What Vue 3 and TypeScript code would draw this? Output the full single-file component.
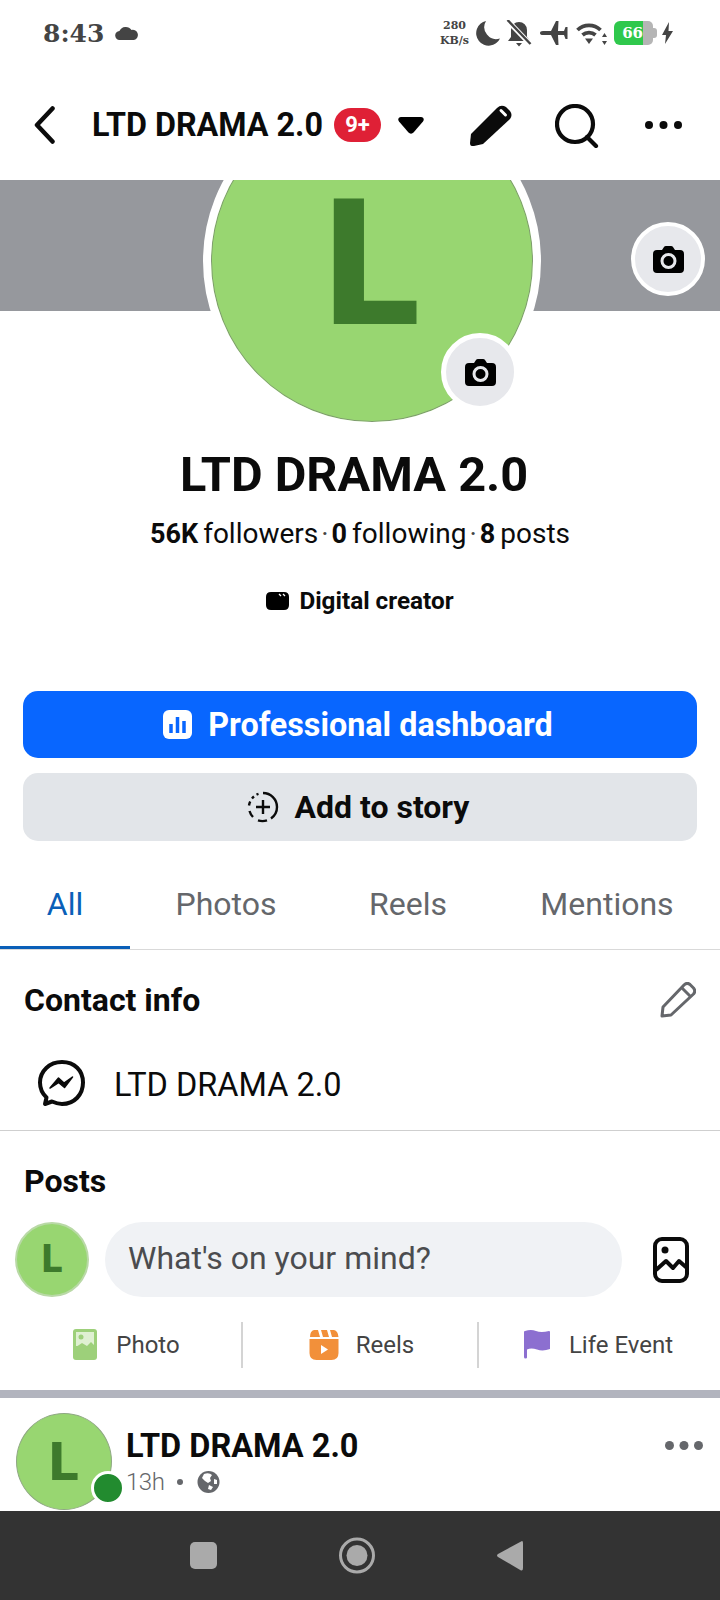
<template>
  <div class="page">
    <div class="main">
      <!-- status bar -->
      <div class="status">
        <div class="status-left">
          <span class="clock">8:43</span>
          <svg width="24" height="14" viewBox="0 0 24 14"><path d="M5 14a4.500 4.500 0 0 1-.6-9A7 7 0 0 1 16.500 4 5 5 0 0 1 19 14z" fill="#444" /></svg>
        </div>
        <div class="status-right">
          <div class="speed"><span>280</span><span>KB/s</span></div>
          <svg class="moon" width="25" height="25" viewBox="0 0 25 25"><path d="M11 0a12.500 12.500 0 1 0 14 17.500A12 12 0 0 1 11 0z" fill="#444" /></svg>
          <svg class="bell" width="26" height="27" viewBox="0 0 26 27" fill="#444">
            <path d="M13 2a8 8 0 0 0-8 8v7l-3 4h22l-3-4v-7a8 8 0 0 0-8-8zM10 23h6l-3 3.500z" />
            <path d="M1 0l24 25" stroke="#fff" stroke-width="5" />
            <path d="M1.500 0l23 24" stroke="#444" stroke-width="2.400" />
          </svg>
          <svg class="plane" width="28" height="24" viewBox="0 0 28 24"><path d="M0 12q0-2 3-2h8L16 0h2.500L18 10h6l1.500-4h2v12h-2L24 14h-6l.5 10H16l-5-10H3q-3 0-3-2z" fill="#444" /></svg>
          <svg class="wifi" width="32" height="23" viewBox="0 0 32 23" fill="none" stroke="#444">
            <path d="M1.500 8a16.500 16.500 0 0 1 23 0M6.500 13a10 10 0 0 1 13 0" stroke-width="3.800" />
            <path d="M9 16.500h8L13 22z" fill="#444" stroke="none" />
            <path d="M28.500 11l-2.500 4h5zM28.500 23l-2.500-4h5z" fill="#444" stroke="none" />
          </svg>
          <div class="battery"><span class="battery-fill">66</span><span class="battery-rest"></span><span class="battery-nub"></span></div>
          <svg class="bolt" width="11" height="22" viewBox="0 0 11 22"><path d="M7 0L0 13h4l-1 9 8-13H6.500z" fill="#444" /></svg>
        </div>
      </div>

      <!-- app bar -->
      <div class="topbar">
        <svg class="back" width="22" height="38" viewBox="0 0 22 38"><path d="M18.500 2.500L3 19l15.500 16.500" fill="none" stroke="#0b0b0b" stroke-width="4.500" stroke-linecap="round" stroke-linejoin="round" /></svg>
        <span class="top-title">LTD DRAMA 2.0</span>
        <span class="badge">9+</span>
        <svg class="caret" width="26" height="17" viewBox="0 0 26 17"><path d="M3 0h20c2.500 0 3.500 2.500 2 4.500L15.500 15.500c-1.300 1.500-3.700 1.500-5 0L1 4.500C-.5 2.500.5 0 3 0z" fill="#000" /></svg>
        <svg class="pencil" width="42" height="41" viewBox="0 0 42 41">
          <path d="M2 41q-2 0-2-3l1-9L27 3q4-4 9-1l4 4q3 4 0 8L13 39l-9 2z" fill="#0b0b0b" />
          <path d="M31 5.500l4.500 4.500" stroke="#fff" stroke-width="3" stroke-linecap="round" />
        </svg>
        <svg class="search" width="46" height="44" viewBox="0 0 46 44" fill="none" stroke="#0b0b0b" stroke-width="4.200">
          <circle cx="20" cy="20" r="18" />
          <path d="M32 33l9 9" stroke-linecap="round" />
        </svg>
        <svg class="more" width="37" height="8" viewBox="0 0 37 8" fill="#0b0b0b"><circle cx="4" cy="4" r="4" /><circle cx="18.500" cy="4" r="4" /><circle cx="33" cy="4" r="4" /></svg>
      </div>

      <!-- cover and profile picture -->
      <div class="cover">
        <div class="avatar-big">L</div>
        <div class="cam cam-avatar">
          <svg width="31" height="27" viewBox="0 0 31 27"><path d="M9 4l2-3q.5-1 2-1h5q1.500 0 2 1l2 3h5q4 0 4 4v15q0 4-4 4H4q-4 0-4-4V8q0-4 4-4z" fill="#000" /><circle cx="15.500" cy="15" r="6.500" fill="none" stroke="#e7e8ec" stroke-width="3" /></svg>
        </div>
        <div class="cam cam-cover">
          <svg width="31" height="27" viewBox="0 0 31 27"><path d="M9 4l2-3q.5-1 2-1h5q1.500 0 2 1l2 3h5q4 0 4 4v15q0 4-4 4H4q-4 0-4-4V8q0-4 4-4z" fill="#000" /><circle cx="15.500" cy="15" r="6.500" fill="none" stroke="#e7e8ec" stroke-width="3" /></svg>
        </div>
      </div>

      <div class="identity">
        <h1 class="name">LTD DRAMA 2.0</h1>
        <div class="stats">
          <template v-for="(stat, i) in stats" :key="stat.label">
            <span v-if="i > 0" class="stat-sep">·</span>
            <span class="stat"><b>{{ stat.value }}</b><span>{{ stat.label }}</span></span>
          </template>
        </div>
        <div class="role">
          <svg width="23" height="18" viewBox="0 0 23 18"><path d="M5 0h13q5 0 5 5v8q0 5-5 5H5q-5 0-5-5V5q0-5 5-5z" fill="#000" /><path d="M13 2l2 2M17 2l2 2" stroke="#fff" stroke-width="1.300" /></svg>
          <span>Digital creator</span>
        </div>
      </div>

      <div class="buttons">
        <div class="btn btn-blue">
          <svg width="29" height="29" viewBox="0 0 29 29"><rect width="29" height="29" rx="6" fill="#fff" /><path d="M8 14v9M14.500 7v16M21 11v12" stroke="#0866ff" stroke-width="3.500" /></svg>
          <span>Professional dashboard</span>
        </div>
        <div class="btn btn-grey">
          <svg width="32" height="32" viewBox="0 0 32 32" fill="none" stroke="#0b0b0b" stroke-width="2.400">
            <path d="M16 2a14 14 0 0 1 14 14 14 14 0 0 1-6 11.500" />
            <path d="M20 29.400a14 14 0 0 1-9 0" />
            <path d="M6 26a14 14 0 0 1-3.500-6M2 14.500a14 14 0 0 1 1.200-4M5 7.500a14 14 0 0 1 2-2M9.500 3.600a14 14 0 0 1 2-.8" />
            <path d="M16 9v14M9 16h14" />
          </svg>
          <span>Add to story</span>
        </div>
      </div>

      <div class="tabs">
        <div v-for="(tab, i) in tabs" :key="tab" class="tab" :class="{ active: i === 0 }">{{ tab }}</div>
      </div>

      <!-- contact info -->
      <div class="contact">
        <div class="contact-head">
          <h2 class="section-title">Contact info</h2>
          <svg width="36" height="36" viewBox="0 0 36 36" fill="none" stroke="#65676b" stroke-width="3" stroke-linejoin="round"><path d="M2 34l1-9L24 3q3-3 6-.5l3.500 3.500q2.500 3 0 6L11 33z" /><path d="M22 6l8 8" /></svg>
        </div>
        <div class="contact-row">
          <svg width="48" height="47" viewBox="0 0 48 47" fill="none"><path d="M25 2C12.500 2 3 11 3 22.500c0 6 2.500 11.300 6.500 15L8 44l7-2.500c3 1.300 6.300 2.500 10 2.500 12.500 0 21-9.500 21-21.500S37.500 2 25 2z" stroke="#0b0b0b" stroke-width="4" stroke-linejoin="round" /><path d="M13 28l8.500-10 5.500 5 8.500-6-8 10.500-6-5z" fill="#0b0b0b" stroke="#0b0b0b" stroke-width="1.500" stroke-linejoin="round" /></svg>
          <span class="contact-name">LTD DRAMA 2.0</span>
        </div>
      </div>

      <!-- posts -->
      <h2 class="section-title posts-title">Posts</h2>
      <div class="composer">
        <div class="avatar-small">L</div>
        <div class="pill">What's on your mind?</div>
        <svg class="composer-photo" width="36" height="46" viewBox="0 0 36 46" fill="none" stroke="#0b0b0b" stroke-width="4"><rect x="2" y="2" width="32" height="42" rx="7" /><circle cx="12" cy="13" r="3.500" fill="#0b0b0b" stroke="none" /><path d="M3 33l10-9 7 7 6-7 8 7" stroke-linejoin="round" /></svg>
      </div>
      <div class="actions">
        <div class="action action-photo">
          <svg width="24" height="31" viewBox="0 0 24 31"><rect width="24" height="31" rx="3" fill="#9dd07a" /><rect x="3" y="3" width="18" height="14" fill="#dff0d2" /><circle cx="8" cy="8" r="2.500" fill="#9dd07a" /><path d="M3 18l6-4 5 3 4-4 3 3v5H3z" fill="#9dd07a" /></svg>
          <span>Photo</span>
        </div>
        <div class="action action-reels">
          <svg width="30" height="30" viewBox="0 0 30 30"><path d="M5 0h4l2 7H1q0-6 4-7zM12 0h6l2 7h-6zM21 0h4q4 1 4.500 7H23z" fill="#f2903a" /><path d="M.500 9h29v14q0 7-7 7h-15q-7 0-7-7z" fill="#f2903a" /><path d="M12 15l7 4.500-7 4.500z" fill="#fff" /></svg>
          <span>Reels</span>
        </div>
        <div class="action action-life">
          <svg width="26" height="29" viewBox="0 0 26 29"><path d="M0 2q0-1 1-1 6-2 11 0t13 0q1 0 1 1v17q-7 2.500-13 .5-6-2-10 0v8q0 1-1.500 1T0 27z" fill="#8c6fd0" /></svg>
          <span>Life Event</span>
        </div>
      </div>
      <div class="thick-rule"></div>

      <div class="post-head">
        <div class="post-avatar">
          <span>L</span>
          <i class="online"></i>
        </div>
        <div class="post-meta">
          <div class="post-name">LTD DRAMA 2.0</div>
          <div class="post-time">
            <span>13h</span>
            <span class="post-dot"></span>
            <svg width="23" height="22" viewBox="0 0 23 22"><circle cx="11.500" cy="11" r="11" fill="#65676b" /><path d="M7 3q5-2 8 1l-2 3 1 3-3 2-3-2-3-3zM12 14l4 2-2 3-3-1zM17 8l3 1 0 4-3 0z" fill="#fff" /></svg>
          </div>
        </div>
        <svg class="post-more" width="38" height="9" viewBox="0 0 38 9" fill="#65676b"><circle cx="4.500" cy="4.500" r="4.500" /><circle cx="19" cy="4.500" r="4.500" /><circle cx="33.500" cy="4.500" r="4.500" /></svg>
      </div>
    </div>

    <!-- android nav -->
    <div class="nav">
      <svg width="27" height="27" viewBox="0 0 27 27"><rect width="27" height="27" rx="5" fill="#aaa" /></svg>
      <svg width="36" height="37" viewBox="0 0 36 37"><circle cx="18" cy="18.500" r="16.500" fill="none" stroke="#aaa" stroke-width="3" /><circle cx="18" cy="18.500" r="10.500" fill="#aaa" /></svg>
      <svg width="26" height="31" viewBox="0 0 26 31"><path d="M25 1q1 0 1 2v25q0 3-2 2.500L1 17q-2-1.500 0-3z" fill="#aaa" /></svg>
    </div>
  </div>
</template>

<script setup lang="ts">
interface Stat {
  value: string
  label: string
}

const stats: Stat[] = [
  { value: '56K', label: 'followers' },
  { value: '0', label: 'following' },
  { value: '8', label: 'posts' }
]

const tabs: string[] = ['All', 'Photos', 'Reels', 'Mentions']
</script>

<style>
html,
body {
  margin: 0;
  background: #fff;
}
</style>

<style scoped>
.page {
  width: 720px;
  height: 1600px;
  display: flex;
  flex-direction: column;
  overflow: hidden;
  background: #fff;
  color: #0b0b0b;
  font-family: Roboto, "Liberation Sans", sans-serif;
}

.main {
  flex: 1;
  min-height: 0;
  overflow: hidden;
}

.status {
  height: 66px;
  display: flex;
  align-items: center;
  justify-content: space-between;
  padding: 0 47px 0 43px;
  position: relative;
  z-index: 2;
  background: #fff;
}

.status-left {
  display: flex;
  align-items: center;
  gap: 11px;
}

.clock {
  font-family: "DejaVu Serif", serif;
  font-weight: 700;
  font-size: 25px;
  color: #444;
}

.status-right {
  display: flex;
  align-items: center;
}

.speed {
  width: 31px;
  display: flex;
  flex-direction: column;
  align-items: center;
  font-family: "DejaVu Serif", serif;
  font-weight: 700;
  font-size: 11px;
  line-height: 15px;
  color: #444;
}

.moon {
  margin-left: 5px;
}

.bell {
  margin-left: 6px;
}

.plane {
  margin-left: 8px;
}

.wifi {
  margin-left: 8px;
}

.battery {
  display: flex;
  align-items: center;
  margin-left: 6px;
  height: 24px;
}

.battery-fill {
  width: 29px;
  height: 24px;
  background: #2fc84c;
  border-radius: 6px 0 0 6px;
  color: #fff;
  font-family: "DejaVu Serif", serif;
  font-weight: 700;
  font-size: 15px;
  line-height: 24px;
  text-align: right;
}

.battery-rest {
  width: 10px;
  height: 24px;
  background: #b5b5b5;
  border-radius: 0 5px 5px 0;
}

.battery-nub {
  width: 4px;
  height: 10px;
  background: #b5b5b5;
  border-radius: 0 3px 3px 0;
}

.bolt {
  margin-left: 5px;
}

.topbar {
  height: 110px;
  padding-top: 4px;
  display: flex;
  align-items: center;
  position: relative;
  z-index: 2;
  background: #fff;
}

.back {
  margin-left: 34px;
}

.top-title {
  margin-left: 36px;
  font-size: 32.300px;
  font-weight: 700;
  white-space: nowrap;
}

.badge {
  margin-left: 11px;
  width: 47px;
  height: 34px;
  border-radius: 17px;
  background: #df2036;
  color: #fff;
  font-size: 22px;
  font-weight: 700;
  line-height: 34px;
  text-align: center;
}

.caret {
  margin-left: 17px;
}

.pencil {
  margin-left: 46px;
}

.search {
  margin-left: 43px;
  margin-top: 2px;
}

.more {
  margin-left: 44px;
}

.cover {
  height: 131px;
  background: #96989d;
  position: relative;
  z-index: 1;
}

.avatar-big {
  position: absolute;
  left: 203px;
  top: -88px;
  width: 322px;
  height: 322px;
  border: 8px solid #fff;
  border-radius: 50%;
  background: #98d671;
  box-shadow: inset 0 0 0 1px #7f9a70;
  color: #3d7a2c;
  font-size: 176px;
  font-weight: 900;
  line-height: 328px;
  text-align: center;
}

.cam {
  position: absolute;
  box-sizing: border-box;
  display: flex;
  align-items: center;
  justify-content: center;
  border: 5px solid #fff;
  border-radius: 50%;
  background: #e7e8ec;
}

.cam-avatar {
  left: 441px;
  top: 153px;
  width: 78px;
  height: 78px;
}

.cam-cover {
  left: 631px;
  top: 42px;
  width: 74px;
  height: 74px;
  border-width: 4px;
}

.identity {
  padding-top: 136px;
  display: flex;
  flex-direction: column;
  align-items: center;
}

.name {
  margin: 0 12px 0 0;
  font-size: 48.700px;
  font-weight: 700;
  line-height: 56px;
  white-space: nowrap;
}

.stats {
  margin-top: 13px;
  font-size: 28px;
  line-height: 36px;
  white-space: nowrap;
  display: flex;
  gap: 3px;
}

.stat {
  display: flex;
  gap: 5px;
}

.stat b {
  font-size: 27px;
}

.stat-sep {
  color: #444;
}

.role {
  margin-top: 34px;
  display: flex;
  align-items: center;
  gap: 10px;
  font-size: 24.300px;
  font-weight: 700;
  line-height: 30px;
}

.buttons {
  margin-top: 75px;
  padding: 0 23px;
  display: flex;
  flex-direction: column;
  gap: 15px;
}

.btn {
  box-sizing: border-box;
  height: 67px;
  padding-right: 4px;
  border-radius: 15px;
  display: flex;
  align-items: center;
  justify-content: center;
  gap: 16px;
  font-size: 32px;
  font-weight: 700;
}

.btn-blue {
  background: #0866ff;
  color: #fff;
  font-size: 32.300px;
}

.btn-grey {
  height: 68px;
  background: #e2e5e9;
}

.tabs {
  display: grid;
  grid-template-columns: 130px 192px 172px 226px;
  border-bottom: 1px solid #d9d9d9;
}

.tab {
  box-sizing: border-box;
  height: 108px;
  padding-top: 45px;
  font-size: 32px;
  line-height: 36px;
  text-align: center;
  color: #65676b;
}

.tab.active {
  color: #0a5fb8;
  border-bottom: 3px solid #0a5fb8;
}

.contact {
  padding-bottom: 16px;
  border-bottom: 1px solid #cfcfcf;
}

.contact-head {
  height: 100px;
  padding: 0 24px 2px;
  display: flex;
  align-items: center;
  justify-content: space-between;
}

.section-title {
  margin: 0;
  font-size: 32px;
  font-weight: 700;
  line-height: 36px;
}

.contact-row {
  height: 62px;
  padding-left: 37px;
  display: flex;
  align-items: center;
  gap: 29px;
  font-size: 32.500px;
}

.contact-name {
  margin-top: 3px;
}

.posts-title {
  padding: 32px 0 1px 24px;
}

.composer {
  margin-top: 22px;
  padding-left: 15px;
  height: 75px;
  display: flex;
  align-items: center;
}

.avatar-small {
  box-sizing: border-box;
  width: 74px;
  height: 75px;
  border: 2px solid #b9d9a6;
  border-radius: 50%;
  background: #98d671;
  color: #3d7a2c;
  font-size: 38px;
  font-weight: 900;
  line-height: 71px;
  text-align: center;
}

.pill {
  box-sizing: border-box;
  margin-left: 16px;
  width: 517px;
  height: 75px;
  padding-left: 23px;
  border-radius: 38px;
  background: #f0f2f5;
  color: #4b4c4f;
  font-size: 32px;
  line-height: 73px;
}

.composer-photo {
  margin-left: 31px;
}

.actions {
  height: 93px;
  padding-top: 2px;
  box-sizing: border-box;
  display: grid;
  grid-template-columns: 241px 236px 243px;
  align-items: center;
}

.action {
  height: 46px;
  display: flex;
  align-items: center;
  justify-content: center;
  gap: 19px;
  font-size: 24px;
  color: #444;
}

.action + .action {
  border-left: 2px solid #d4d4d4;
}

.action-photo {
  padding-left: 12px;
}

.action-reels {
  padding-left: 3px;
  gap: 17px;
}

.action-life {
  padding-right: 2px;
}

.thick-rule {
  height: 8px;
  background: #b2b4be;
}

.post-head {
  padding: 15px 17px 0 16px;
  display: flex;
  align-items: flex-start;
}

.post-avatar {
  position: relative;
  box-sizing: border-box;
  width: 96px;
  height: 97px;
  border: 1px solid #8fa883;
  border-radius: 50%;
  background: #98d671;
  color: #3d7a2c;
  font-size: 54px;
  font-weight: 900;
  line-height: 95px;
  text-align: center;
}

.online {
  position: absolute;
  left: 74px;
  top: 57px;
  box-sizing: border-box;
  width: 34px;
  height: 34px;
  border: 3px solid #fff;
  border-radius: 50%;
  background: #228b2f;
}

.post-meta {
  margin: 15px 0 0 14px;
}

.post-name {
  font-size: 32.500px;
  font-weight: 700;
  line-height: 36px;
  white-space: nowrap;
}

.post-time {
  margin-top: 3px;
  display: flex;
  align-items: center;
  font-size: 24px;
  font-weight: 300;
  letter-spacing: -0.5px;
  line-height: 30px;
  color: #65676b;
}

.post-dot {
  width: 6px;
  height: 6px;
  margin: 0 14px 0 13px;
  border-radius: 50%;
  background: #65676b;
}

.post-more {
  margin: 28px 0 0 auto;
}

.nav {
  height: 89px;
  flex-shrink: 0;
  box-sizing: border-box;
  padding-left: 190px;
  display: flex;
  align-items: center;
  gap: 122px;
  background: #333;
}
</style>
